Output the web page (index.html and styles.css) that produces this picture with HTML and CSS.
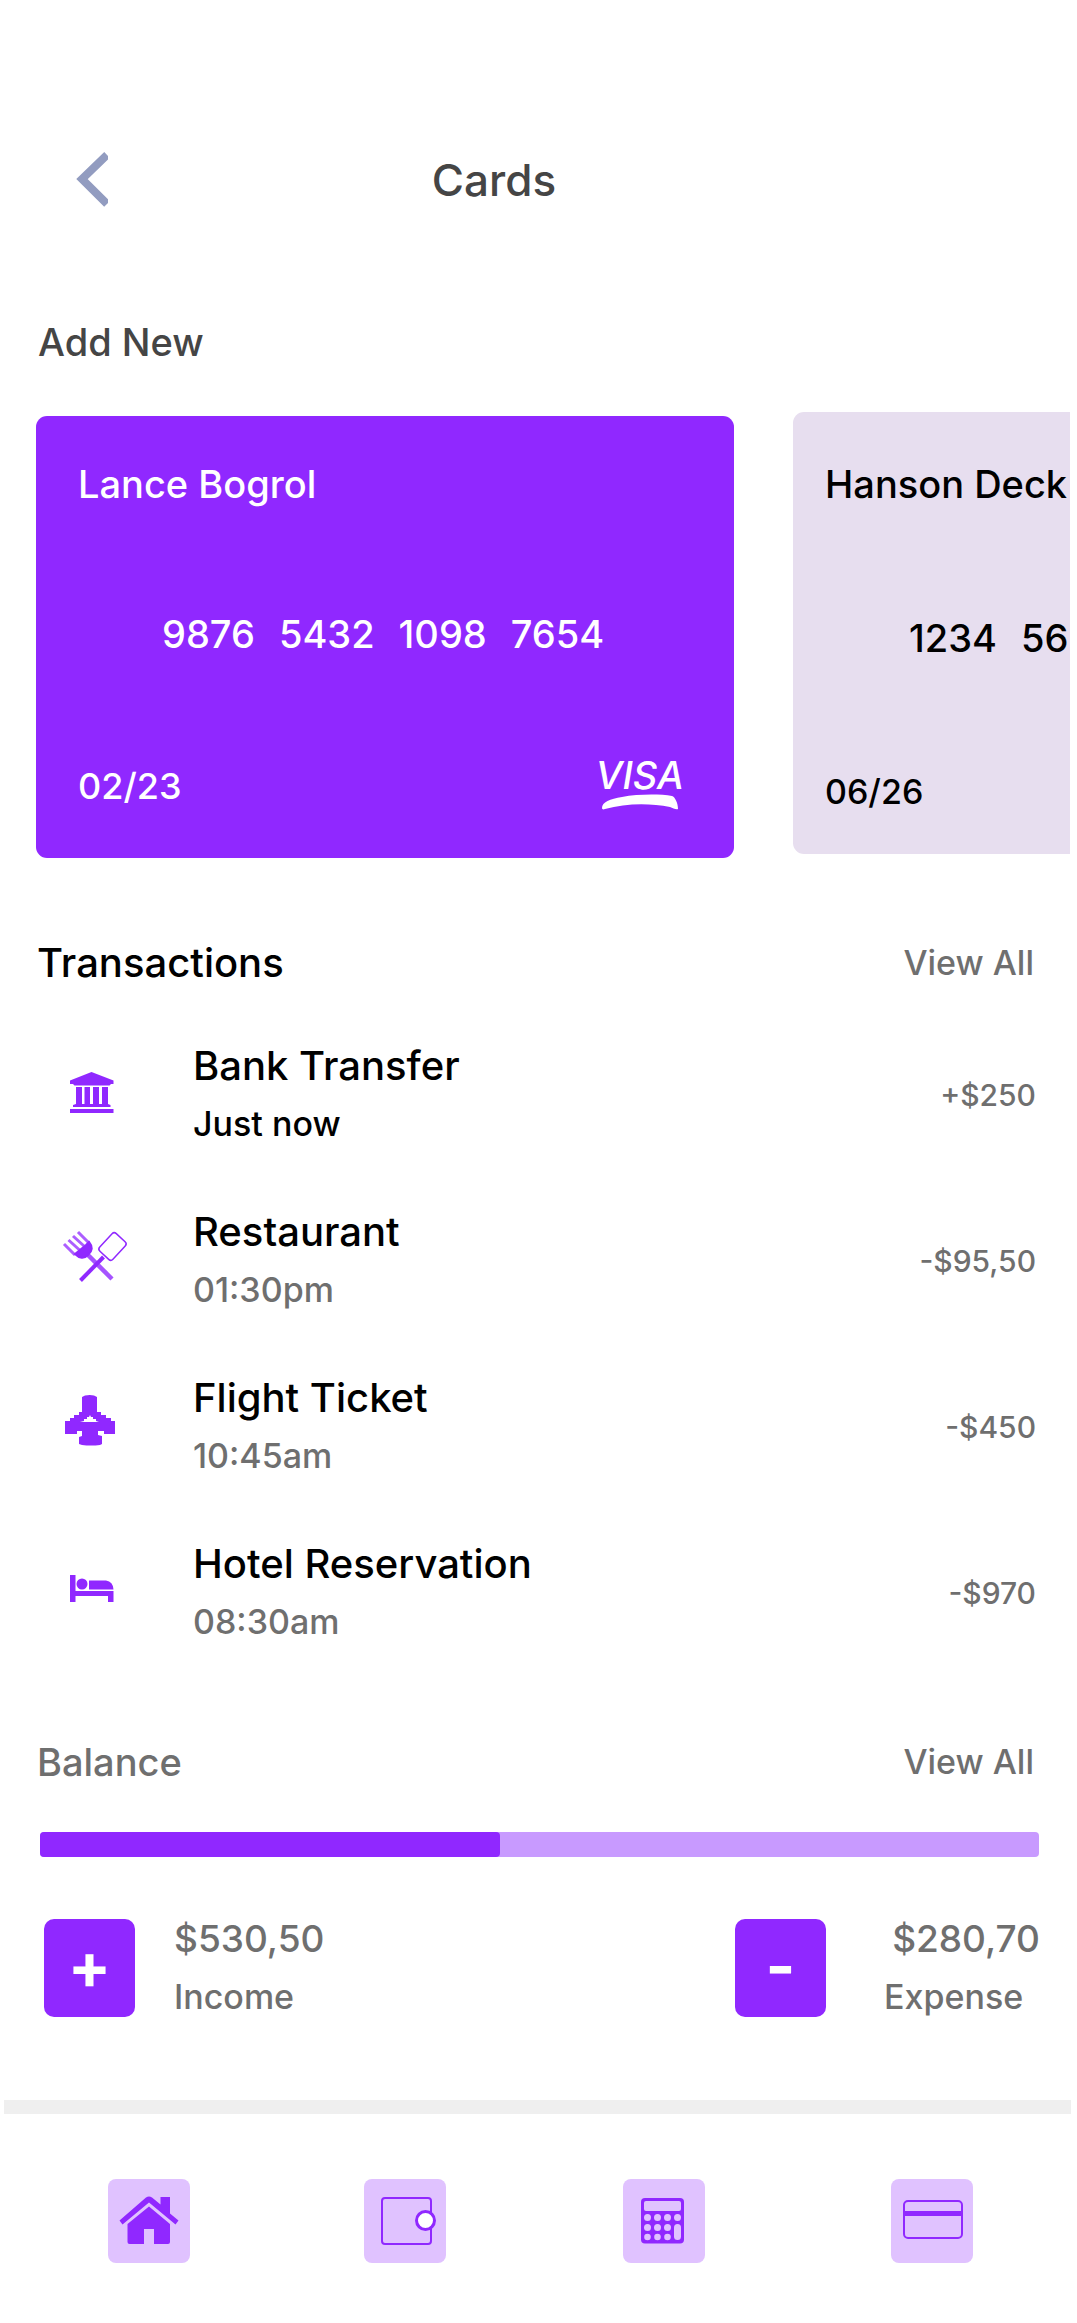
FILE: index.html
```html
<!DOCTYPE html>
<html lang="en">
<head>
<meta charset="utf-8">
<meta name="viewport" content="width=device-width, initial-scale=1">
<title>Cards</title>
<link rel="stylesheet" href="styles.css">
</head>
<body>
<header class="topbar">
  <button class="back" type="button" aria-label="Back">
    <svg width="32" height="56" viewBox="0 0 32 56"><path d="M31 3 6 27l25 25" fill="none" stroke="#929cc0" stroke-width="8"/></svg>
  </button>
  <h1 class="page-title">Cards</h1>
</header>
<main>
  <a class="add-new" href="#add">Add New</a>
  <section class="cards" aria-label="Your cards">
    <article class="card card-primary">
      <h2 class="card-name">Lance Bogrol</h2>
      <p class="card-number"><span>9876</span><span>5432</span><span>1098</span><span>7654</span></p>
      <div class="card-foot">
        <span class="card-date">02/23</span>
        <div class="visa">
          <span class="visa-name">VISA</span>
          <svg width="76" height="20" viewBox="0 0 76 20"><path d="M0 18C0 12 8 9 20 7 36 4 58 4 70 6c3 1 6 7 6 13-2 1-5-1-8-2C48 13 24 13 3 19c-2 1-3 0-3-1z" fill="#fff"/></svg>
        </div>
      </div>
    </article>
    <article class="card card-secondary">
      <h2 class="card-name">Hanson Deck</h2>
      <p class="card-number"><span>1234</span><span>56</span></p>
      <div class="card-foot"><span class="card-date">06/26</span></div>
    </article>
  </section>

  <section class="transactions">
    <div class="section-head">
      <h2 class="section-title">Transactions</h2>
      <a class="view-all" href="#transactions">View All</a>
    </div>
    <ul class="tx-list">
      <li class="tx">
        <svg class="tx-icon" viewBox="52 1056 80 80"><path d="M91.500 1073 113.500 1081.500v3.500h-2.500l-1.500 1.500h-35l-1.500-1.500H70v-3.500zM76 1088h6v17h2.500v-17H90v17h3v-17h6v17h3v-17h6v17l2.500 1v2H73v-2l3-1zM70 1110h43.500v4H70z"/></svg>
        <div class="tx-text"><h3 class="tx-name">Bank Transfer</h3><p class="tx-time now">Just now</p></div>
        <span class="tx-amount">+$250</span>
      </li>
      <li class="tx">
        <svg class="tx-icon" viewBox="52 1222 80 80">
          <g fill="none" stroke="#9028ff">
            <path d="m88 1256 24 24" stroke-width="4.500" stroke-opacity=".8"/>
            <g stroke-opacity=".75"><path d="m64 1245 11 11M68.500 1241l11 10M73 1237l11 10M78 1233l11 11" stroke-width="3"/></g>
            <path d="M75 1255q7 7 13 1 7-6 1-13l-3 3z" fill="#9028ff" stroke-width="2"/>
            <path d="m80.500 1281.500 23-23.500" stroke-width="4"/>
            <rect x="-12" y="-9" width="24" height="18" rx="3" transform="translate(112.500 1247.500) rotate(-47)" stroke-width="1.500"/>
          </g>
        </svg>
        <div class="tx-text"><h3 class="tx-name">Restaurant</h3><p class="tx-time">01:30pm</p></div>
        <span class="tx-amount">-$95,50</span>
      </li>
      <li class="tx">
        <svg class="tx-icon" viewBox="52 1388 80 80"><path fill-rule="evenodd" d="M82 1398l3-1.500q5-1 9 0l3 1.500v15h4v3h5v3h5v3h4v13h-11v-3h-6v4l4 1v8l-2 1q-9 1-18 0l-3-1v-7l3-1v-5h-5v3H65v-13h5v-3h4v-3h5v-3h3zM90 1416l-1 2h-2v2h-3v2l-4 1h19l-3-1v-2h-3v-2h-2z"/></svg>
        <div class="tx-text"><h3 class="tx-name">Flight Ticket</h3><p class="tx-time">10:45am</p></div>
        <span class="tx-amount">-$450</span>
      </li>
      <li class="tx">
        <svg class="tx-icon" viewBox="52 1554 80 80"><path d="M70 1576h5.500v16h38v11H108v-6H75.500v6H70z"/><circle cx="82" cy="1585" r="5.500"/><path d="M89 1581.500h17q7 1 7.500 9H89z"/></svg>
        <div class="tx-text"><h3 class="tx-name">Hotel Reservation</h3><p class="tx-time">08:30am</p></div>
        <span class="tx-amount">-$970</span>
      </li>
    </ul>
  </section>

  <section class="balance">
    <div class="section-head">
      <h2 class="section-title muted">Balance</h2>
      <a class="view-all" href="#balance">View All</a>
    </div>
    <div class="bar" role="progressbar" aria-label="Balance" aria-valuenow="46" aria-valuemin="0" aria-valuemax="100"><div class="bar-fill" style="width:46%"></div></div>
    <div class="totals">
      <div class="total">
        <button class="sign" type="button">+</button>
        <div class="total-text"><span class="total-sum">$530,50</span><span class="total-label">Income</span></div>
      </div>
      <div class="total total-expense">
        <button class="sign" type="button">-</button>
        <div class="total-text"><span class="total-sum">$280,70</span><span class="total-label">Expense</span></div>
      </div>
    </div>
  </section>
</main>
<nav class="tabs" aria-label="Main">
  <a class="tab" href="#home" aria-label="Home"><svg viewBox="0 0 82 84"><path d="M38 18.500q3-2 6 0l8.500 7V18H62v16.500l8.500 7-3 4L41 23.500 14.500 45.500l-3-4z"/><path d="M41 27.500 62 45v18q0 2-2 2H46V50H36v15H21.500q-2 0-2-2V45z"/></svg></a>
  <a class="tab" href="#wallet" aria-label="Wallet"><svg viewBox="0 0 82 84"><rect x="18" y="19" width="49" height="46" rx="3" fill="none" stroke="#9028ff" stroke-width="2"/><circle cx="61.500" cy="41.500" r="9" fill="#fff" stroke="#9028ff" stroke-width="3"/></svg></a>
  <a class="tab" href="#budget" aria-label="Calculator"><svg viewBox="0 0 82 84"><rect x="18" y="19" width="43" height="45.500" rx="4"/><g fill="#e0c2ff"><rect x="21" y="22" width="37" height="10" rx="2"/><circle cx="24.500" cy="38.500" r="3.500"/><circle cx="34.500" cy="38.500" r="3.500"/><circle cx="44.500" cy="38.500" r="3.500"/><circle cx="54.500" cy="38.500" r="3.500"/><circle cx="24.500" cy="48.500" r="3.500"/><circle cx="34.500" cy="48.500" r="3.500"/><circle cx="44.500" cy="48.500" r="3.500"/><circle cx="24.500" cy="58" r="3.300"/><circle cx="34.500" cy="58" r="3.300"/><circle cx="44.500" cy="58" r="3.300"/><rect x="51" y="45" width="7" height="16" rx="3.500"/></g></svg></a>
  <a class="tab" href="#cards" aria-label="Cards"><svg viewBox="0 0 82 84"><rect x="13" y="22" width="58" height="37" rx="4" fill="none" stroke="#9028ff" stroke-width="2"/><path d="M13 32h58v5H13z"/></svg></a>
</nav>
</body>
</html>
```
FILE: styles.css
```css
* { box-sizing: border-box; margin: 0; padding: 0; }

body {
  background: #fff;
  color: #000;
  font-family: Inter, "Open Sans", sans-serif;
  font-size: 38px;
  font-weight: 500;
  line-height: 48px;
  overflow-x: hidden;
}

a { color: inherit; text-decoration: none; }
button { border: 0; background: none; font: inherit; color: inherit; cursor: pointer; }
ul { list-style: none; }
h1, h2, h3 { font-size: inherit; font-weight: inherit; }
svg { display: block; fill: #9028ff; }

.topbar { display: flex; align-items: center; padding: 152px 76px 0; color: #454545; }
.page-title { margin-left: 35%; font-size: 44px; line-height: 56px; }

.add-new { display: block; margin: 110px 38px 46px; color: #454545; }

.cards { display: flex; align-items: flex-start; gap: 59px; padding: 0 7px 0 36px; }
.card { display: flex; flex-direction: column; justify-content: space-between; height: 442px; white-space: nowrap; }
.card-primary { flex: 0 0 698px; margin-top: 4px; padding: 44px 50px 48px 42px; border-radius: 11px; background: #9028ff; color: #fff; }
.card-secondary { flex: 1 1 0; min-width: 0; padding: 48px 0 38px 32px; border-radius: 11px 0 0 11px; background: #e7deef; }
.card-number { display: flex; gap: 24px; padding-left: 84px; }
.card-foot { display: flex; justify-content: space-between; align-items: flex-end; }
.card-date { font-size: 36px; }
.card-secondary .card-date { font-size: 34px; }
.visa { display: flex; flex-direction: column; align-items: center; }
.visa-name { font-style: italic; line-height: 30px; }

.section-head { display: flex; justify-content: space-between; align-items: center; padding: 0 43px 0 37px; }
.section-title { font-size: 40px; }
.section-title.muted { font-size: 38px; }
.view-all { color: #6f6f6f; font-size: 34px; }
.muted { color: #6f6f6f; }

.transactions { margin-top: 81px; }
.tx-list { display: flex; flex-direction: column; gap: 60px; margin-top: 55px; padding: 0 41px 0 52px; }
.tx { display: flex; align-items: center; }
.tx-icon { flex: none; width: 80px; height: 80px; }
.tx-text { display: flex; flex-direction: column; gap: 10px; flex: 1; margin-left: 61px; }
.tx-name { font-size: 40px; }
.tx-time { color: #6f6f6f; font-size: 34px; }
.tx-time.now { color: #000; }
.tx-amount { color: #6f6f6f; font-size: 30px; }

.balance { margin-top: 92px; }
.bar { height: 25px; margin: 46px 38px 0 40px; border-radius: 4px; background: #c89aff; }
.bar-fill { height: 100%; border-radius: 4px; background: #9028ff; }
.totals { display: flex; justify-content: space-between; margin-top: 58px; padding: 0 37px 0 44px; color: #6f6f6f; }
.total { display: flex; align-items: center; gap: 39px; }
.total-expense { gap: 58px; }
.total-text { display: flex; flex-direction: column; gap: 10px; min-width: 156px; }
.total-sum { font-size: 37px; }
.total-label { font-size: 34px; }
.total-expense .total-sum { align-self: flex-end; }
.sign { width: 91px; height: 98px; padding-bottom: 4px; border-radius: 10px; background: #9028ff; color: #fff; font-size: 64px; font-weight: 700; }

.tabs { display: grid; grid-template-columns: 256fr 259fr 268fr 82px; margin: 79px 6px 0 4px; padding: 65px 98px 60px 104px; border-top: 14px solid #efefef; }
.tab { width: 82px; height: 84px; border-radius: 8px; background: #e0c2ff; }
```
